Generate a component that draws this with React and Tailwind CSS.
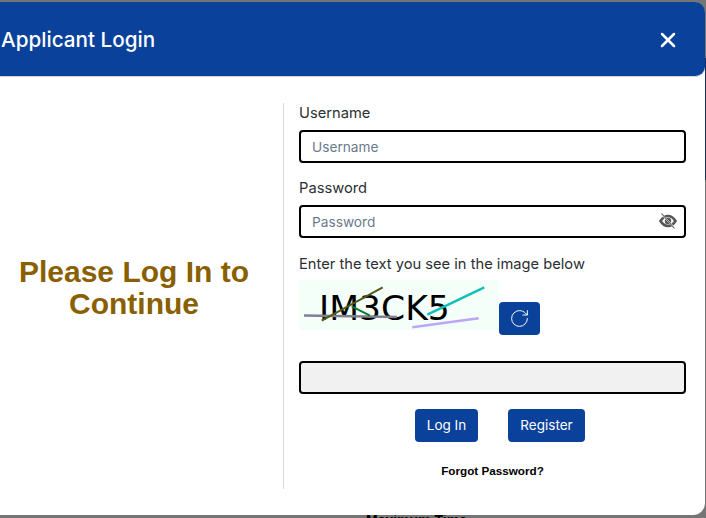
import { X, RotateCw } from "lucide-react";

const Field = ({ label, placeholder, children }) => {
  return (
    <div>
      <label className="block text-[14.7px] leading-[21px] text-[#2b2f33] mb-[6px]">{label}</label>
      <div className="relative">
        <input
          placeholder={placeholder}
          className="w-full h-[33px] rounded-[4px] border-2 border-black bg-white pl-[11px] pr-[12px] text-[13.7px] outline-none placeholder:text-[#6b7a8c]"
        />
        {children}
      </div>
    </div>
  );
};

const EyeOff = () => {
  return (
    <svg viewBox="0 0 18 16" className="absolute right-[9px] top-[8px] w-[18px] h-[16px]">
      <path d="M1.5 8 C4 4 6.5 3 9 3 C11.5 3 14 4 16.5 8 C14 12 11.5 13 9 13 C6.5 13 4 12 1.5 8 Z" fill="none" stroke="#555" strokeWidth="2.6" />
      <circle cx="9" cy="8" r="3.2" fill="#555" />
      <line x1="2.5" y1="1" x2="15.5" y2="15" stroke="#fff" strokeWidth="1.8" />
      <line x1="2.5" y1="0.5" x2="15.5" y2="15.5" stroke="#555" strokeWidth="1.1" />
    </svg>
  );
};

const Captcha = () => {
  return (
    <svg width="200" height="50" className="block bg-[#f5fffa]">
      <text x="20" y="40" fontSize="34.6" fontFamily="DejaVu Sans, sans-serif" fill="#000">IM3CK5</text>
      <line x1="5" y1="35.5" x2="98" y2="37" stroke="#808090" strokeWidth="2.5" />
      <line x1="22.7" y1="40.7" x2="83.7" y2="7.3" stroke="#55591a" strokeWidth="2" />
      <line x1="52.7" y1="26.3" x2="71" y2="35.7" stroke="#0e7a2c" strokeWidth="2" />
      <line x1="128.3" y1="34.7" x2="185.3" y2="7.3" stroke="#10c0b8" strokeWidth="2.5" />
      <line x1="113.3" y1="47.3" x2="179.7" y2="38.3" stroke="#bca6f5" strokeWidth="2.5" />
    </svg>
  );
};

export default function App() {
  return (
    <div className="relative h-[518px] w-[706px] overflow-hidden bg-[#757575] pt-[2px] font-['Inter',sans-serif]">
      {/* page behind the modal */}
      <div className="absolute left-[366px] top-[510px] text-[14px] font-semibold text-black font-['Liberation_Sans',sans-serif]">
        Maximum Time
      </div>
      <div className="absolute right-0 top-[58px] w-px h-[122px] bg-[#14305f]" />

      {/* Modal */}
      <div className="relative w-[705px] h-[513px] rounded-r-[12px] bg-white flex flex-col">
        <header className="h-[75px] shrink-0 bg-[#0a419b] rounded-r-[10px] border-b border-[#d6d6d6] flex items-center justify-between pl-px pr-[25px] pt-[2px] text-white">
          <h1 className="text-[20.7px] font-medium leading-none">Applicant Login</h1>
          <X className="w-[24px] h-[24px]" strokeWidth={2.5} />
        </header>

        <div className="flex pt-[26px]">
          <div className="w-[284px] h-[386px] border-r border-[#d9d9d9] pr-[15px] pb-[16px] flex items-center justify-center">
            <p className="text-[30px] leading-[32px] font-bold text-[#8a5f00] text-center font-['Liberation_Sans',sans-serif]">
              Please Log In to
              <br />
              Continue
            </p>
          </div>

          <div className="w-[387px] ml-[15px] flex flex-col">
            <div className="flex flex-col gap-[15px]">
              <Field label="Username" placeholder="Username" />
              <Field label="Password" placeholder="Password">
                <EyeOff />
              </Field>
            </div>

            <div className="mt-[16px] text-[14.7px] leading-[21px] text-[#2b2f33]">
              Enter the text you see in the image below
            </div>

            <div className="mt-[5px] flex items-end">
              <Captcha />
              <button className="w-[41px] h-[33px] -mb-[5px] rounded-[4px] bg-[#0a419b] flex items-center justify-center text-white">
                <RotateCw className="w-[21px] h-[21px]" strokeWidth={1.1} />
              </button>
            </div>

            <input className="mt-[31px] w-full h-[33px] rounded-[4px] border-2 border-black bg-[#f1f1f1] outline-none" />

            <div className="mt-[15px] pl-[15px] flex justify-center gap-[30px]">
              <button className="h-[33px] w-[63px] rounded-[4px] bg-[#0a419b] text-white text-[13.5px]">Log In</button>
              <button className="h-[33px] w-[77px] rounded-[4px] bg-[#0a419b] text-white text-[13.5px]">Register</button>
            </div>

            <div className="mt-[22px] text-center text-[11.7px] leading-[14px] font-bold text-black font-['Liberation_Sans',sans-serif]">
              Forgot Password?
            </div>
          </div>
        </div>
      </div>
    </div>
  );
}
